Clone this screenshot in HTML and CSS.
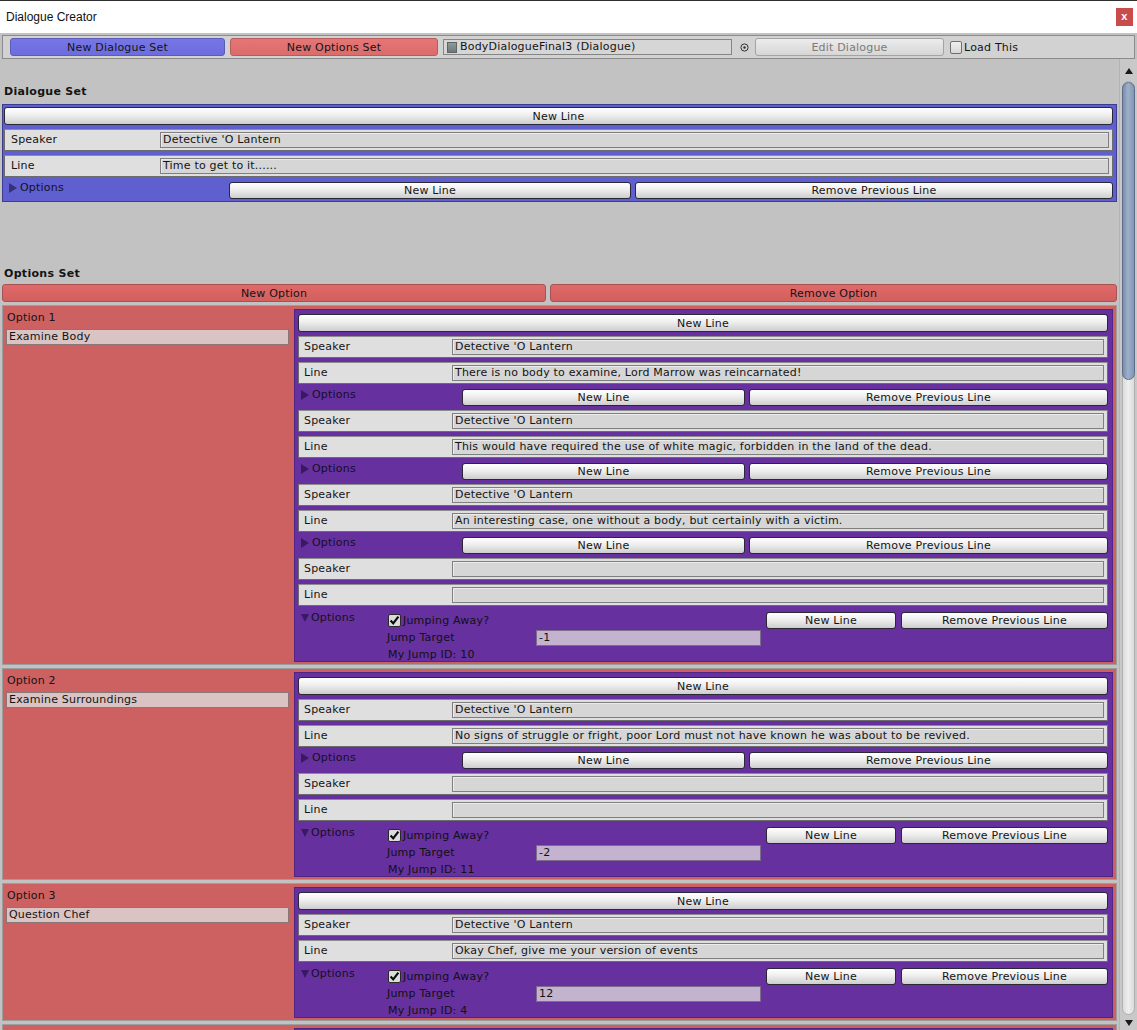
FILE: index.html
```html
<!DOCTYPE html>
<html>
<head>
<meta charset="utf-8">
<title>Dialogue Creator</title>
<link rel="stylesheet" href="styles.css">
</head>
<body>
<header class="titlebar">
  <span class="title">Dialogue Creator</span>
  <span class="close">x</span>
</header>
<div class="toolbar">
  <button class="tbtn tbtn-blue">New Dialogue Set</button>
  <button class="tbtn tbtn-red">New Options Set</button>
  <div class="objfield"><span class="objicon"></span>BodyDialogueFinal3 (Dialogue)</div>
  <svg class="picker" width="9" height="9" viewBox="0 0 9 9"><circle cx="4.5" cy="4.5" r="3.6" fill="none" stroke="#333" stroke-width="1"/><circle cx="4.5" cy="4.5" r="1.2" fill="#333"/></svg>
  <button class="tbtn tbtn-disabled">Edit Dialogue</button>
  <span class="tcheck"><span class="cbox"></span>Load This</span>
</div>
<div class="main">
  <div class="content">
    <div class="section-label">Dialogue Set</div>
    <div class="dlg-box">
      <button class="btn btn-full">New Line</button>
      <div class="row"><span class="row-label">Speaker</span><span class="field">Detective 'O Lantern</span></div>
      <div class="row"><span class="row-label">Line</span><span class="field">Time to get to it......</span></div>
      <div class="opt-row"><span class="foldout"><span class="tri-right"></span>Options</span><button class="btn btn-nl">New Line</button><button class="btn btn-rm">Remove Previous Line</button></div>
    </div>

    <div class="section-label section-label-2">Options Set</div>
    <div class="opt-actions">
      <button class="rbtn rbtn-new">New Option</button>
      <button class="rbtn rbtn-rm">Remove Option</button>
    </div>

    <div class="option">
      <div class="option-left">
        <div class="option-title">Option 1</div>
        <div class="option-field">Examine Body</div>
      </div>
      <div class="panel">
        <button class="btn btn-full">New Line</button>
        <div class="row"><span class="row-label">Speaker</span><span class="field">Detective 'O Lantern</span></div>
        <div class="row"><span class="row-label">Line</span><span class="field">There is no body to examine, Lord Marrow was reincarnated!</span></div>
        <div class="opt-row"><span class="foldout"><span class="tri-right"></span>Options</span><button class="btn btn-nl">New Line</button><button class="btn btn-rm">Remove Previous Line</button></div>
        <div class="row"><span class="row-label">Speaker</span><span class="field">Detective 'O Lantern</span></div>
        <div class="row"><span class="row-label">Line</span><span class="field">This would have required the use of white magic, forbidden in the land of the dead.</span></div>
        <div class="opt-row"><span class="foldout"><span class="tri-right"></span>Options</span><button class="btn btn-nl">New Line</button><button class="btn btn-rm">Remove Previous Line</button></div>
        <div class="row"><span class="row-label">Speaker</span><span class="field">Detective 'O Lantern</span></div>
        <div class="row"><span class="row-label">Line</span><span class="field">An interesting case, one without a body, but certainly with a victim.</span></div>
        <div class="opt-row"><span class="foldout"><span class="tri-right"></span>Options</span><button class="btn btn-nl">New Line</button><button class="btn btn-rm">Remove Previous Line</button></div>
        <div class="row"><span class="row-label">Speaker</span><span class="field"></span></div>
        <div class="row"><span class="row-label">Line</span><span class="field"></span></div>
        <div class="opt-exp">
          <span class="foldout foldout-exp"><span class="tri-down"></span>Options</span>
          <div class="jump">
            <div class="jump-toggle"><svg class="check" width="13" height="13" viewBox="0 0 13 13"><rect x="0.5" y="0.5" width="12" height="12" rx="1.5" fill="#dcdcdc" stroke="#2a2a2a"/><path d="M2.6 6.6 L5.2 9.4 L10.4 2.6" fill="none" stroke="#0d0d0d" stroke-width="2.2"/></svg><span class="jt">Jumping Away?</span></div>
            <div class="jump-target"><span class="jump-label">Jump Target</span><span class="jump-field">-1</span></div>
            <div class="jump-id">My Jump ID: 10</div>
          </div>
          <button class="btn btn-nl2">New Line</button><button class="btn btn-rm2">Remove Previous Line</button>
        </div>
      </div>
    </div>

    <div class="option">
      <div class="option-left">
        <div class="option-title">Option 2</div>
        <div class="option-field">Examine Surroundings</div>
      </div>
      <div class="panel">
        <button class="btn btn-full">New Line</button>
        <div class="row"><span class="row-label">Speaker</span><span class="field">Detective 'O Lantern</span></div>
        <div class="row"><span class="row-label">Line</span><span class="field">No signs of struggle or fright, poor Lord must not have known he was about to be revived.</span></div>
        <div class="opt-row"><span class="foldout"><span class="tri-right"></span>Options</span><button class="btn btn-nl">New Line</button><button class="btn btn-rm">Remove Previous Line</button></div>
        <div class="row"><span class="row-label">Speaker</span><span class="field"></span></div>
        <div class="row"><span class="row-label">Line</span><span class="field"></span></div>
        <div class="opt-exp">
          <span class="foldout foldout-exp"><span class="tri-down"></span>Options</span>
          <div class="jump">
            <div class="jump-toggle"><svg class="check" width="13" height="13" viewBox="0 0 13 13"><rect x="0.5" y="0.5" width="12" height="12" rx="1.5" fill="#dcdcdc" stroke="#2a2a2a"/><path d="M2.6 6.6 L5.2 9.4 L10.4 2.6" fill="none" stroke="#0d0d0d" stroke-width="2.2"/></svg><span class="jt">Jumping Away?</span></div>
            <div class="jump-target"><span class="jump-label">Jump Target</span><span class="jump-field">-2</span></div>
            <div class="jump-id">My Jump ID: 11</div>
          </div>
          <button class="btn btn-nl2">New Line</button><button class="btn btn-rm2">Remove Previous Line</button>
        </div>
      </div>
    </div>

    <div class="option">
      <div class="option-left">
        <div class="option-title">Option 3</div>
        <div class="option-field">Question Chef</div>
      </div>
      <div class="panel">
        <button class="btn btn-full">New Line</button>
        <div class="row"><span class="row-label">Speaker</span><span class="field">Detective 'O Lantern</span></div>
        <div class="row"><span class="row-label">Line</span><span class="field">Okay Chef, give me your version of events</span></div>
        <div class="opt-exp">
          <span class="foldout foldout-exp"><span class="tri-down"></span>Options</span>
          <div class="jump">
            <div class="jump-toggle"><svg class="check" width="13" height="13" viewBox="0 0 13 13"><rect x="0.5" y="0.5" width="12" height="12" rx="1.5" fill="#dcdcdc" stroke="#2a2a2a"/><path d="M2.6 6.6 L5.2 9.4 L10.4 2.6" fill="none" stroke="#0d0d0d" stroke-width="2.2"/></svg><span class="jt">Jumping Away?</span></div>
            <div class="jump-target"><span class="jump-label">Jump Target</span><span class="jump-field">12</span></div>
            <div class="jump-id">My Jump ID: 4</div>
          </div>
          <button class="btn btn-nl2">New Line</button><button class="btn btn-rm2">Remove Previous Line</button>
        </div>
      </div>
    </div>

    <div class="option option-cut">
      <div class="option-left"></div>
      <div class="panel panel-cut"></div>
    </div>
  </div>
  <div class="scrollbar">
    <span class="sb-arrow sb-up"></span>
    <div class="sb-track">
      <div class="sb-thumb"></div>
    </div>
    <span class="sb-arrow sb-down"></span>
  </div>
</div>
</body>
</html>
```

FILE: styles.css
```css
* { box-sizing: border-box; }
html, body { margin: 0; padding: 0; }
body {
  width: 1137px;
  height: 1030px;
  overflow: hidden;
  background: #c2c2c2;
  font-family: "DejaVu Sans", Verdana, sans-serif;
  font-size: 11px;
  letter-spacing: 0.2px;
  color: #141414;
}
button {
  font: inherit;
  letter-spacing: inherit;
  color: #141414;
  padding: 0;
  margin: 0;
  cursor: default;
}

/* title bar */
.titlebar {
  height: 33px;
  background: #ffffff;
  border-top: 1px solid #2e2e2e;
  display: flex;
  align-items: center;
  justify-content: space-between;
  padding: 0 4px 0 6px;
}
.title {
  font-family: "Liberation Sans", Arial, sans-serif;
  font-size: 12px;
  letter-spacing: 0;
  color: #111;
  margin-top: -1px;
}
.close {
  width: 17px;
  height: 18px;
  background: #c94b4b;
  color: #fff;
  font-family: "Liberation Sans", Arial, sans-serif;
  font-size: 11px;
  font-weight: bold;
  display: flex;
  align-items: center;
  justify-content: center;
  line-height: 1;
  padding-bottom: 2px;
}

/* toolbar */
.toolbar {
  margin: 2px 2px 0;
  height: 24px;
  border: 1px solid #8b8b8b;
  background: #d2d2d2;
  display: flex;
  align-items: center;
  padding-left: 7px;
}
.tbtn {
  height: 18px;
  border-radius: 3px;
  line-height: 17px;
  text-align: center;
}
.tbtn-blue {
  width: 215px;
  background: linear-gradient(#7676e6, #6c6cde);
  border: 1px solid #5b5bb8;
}
.tbtn-red {
  width: 208px;
  margin-left: 5px;
  background: linear-gradient(#e67575, #dc6b6b);
  border: 1px solid #b85b5b;
}
.objfield {
  width: 289px;
  height: 16px;
  margin-left: 5px;
  background: #d6d6d6;
  border: 1px solid #858585;
  display: flex;
  align-items: center;
  padding-left: 3px;
  line-height: 14px;
  white-space: nowrap;
}
.objicon {
  width: 10px;
  height: 11px;
  margin-right: 3px;
  background: linear-gradient(#8f9a9a, #6d7878);
  border: 1px solid #5c6464;
}
.picker { margin-left: 8px; }
.tbtn-disabled {
  width: 189px;
  margin-left: 6px;
  color: #7a7a7a;
  background: linear-gradient(#ececec, #d6d6d6);
  border: 1px solid #a3a3a3;
}
.tcheck {
  margin-left: 6px;
  display: flex;
  align-items: center;
}
.cbox {
  width: 12px;
  height: 13px;
  border: 1px solid #707070;
  border-radius: 2px;
  background: linear-gradient(#efefef, #d8d8d8);
  margin-right: 2px;
}

/* main */
.main {
  display: flex;
  height: 971px;
}
.content {
  width: 1119px;
  overflow: hidden;
  padding: 0 2px;
}
.section-label {
  margin-top: 26px;
  padding-left: 2px;
  line-height: 14px;
  font-weight: bold;
  letter-spacing: 0.3px;
}
.section-label-2 { margin-top: 65px; }

/* generic buttons */
.btn {
  height: 17px;
  border: 1px solid #2b2836;
  border-radius: 3px;
  background: linear-gradient(#ffffff 0%, #eeeeee 45%, #cdcdcd 100%);
  line-height: 16px;
  text-align: center;
  white-space: nowrap;
}
.btn-full {
  display: block;
  width: 100%;
  height: 18px;
  line-height: 17px;
}

/* rows */
.row {
  height: 22px;
  margin-top: 4px;
  background: #dfdfdf;
  border: 1px solid #6c6c6c;
  border-top-color: #8d8d8d;
  display: flex;
  align-items: center;
}
.row-label {
  width: 153px;
  flex: 0 0 153px;
  padding-left: 5px;
  line-height: 14px;
}
.field {
  flex: 1;
  height: 16px;
  margin-right: 3px;
  background: #d6d6d6;
  border: 1px solid #7f7f7f;
  box-shadow: inset 1px 1px 0 #ececec;
  padding-left: 2px;
  line-height: 14px;
  white-space: nowrap;
  overflow: hidden;
}

.opt-row {
  height: 22px;
  display: flex;
  align-items: flex-start;
  padding-top: 5px;
}
.foldout {
  display: flex;
  align-items: center;
  line-height: 14px;
  margin-top: -1px;
  padding-left: 3px;
  color: #14101e;
}
.tri-right {
  width: 0;
  height: 0;
  border-top: 5px solid transparent;
  border-bottom: 5px solid transparent;
  border-left: 8px solid rgba(20, 10, 50, 0.55);
  margin-right: 3px;
}
.tri-down {
  width: 0;
  height: 0;
  border-left: 4.5px solid transparent;
  border-right: 4.5px solid transparent;
  border-top: 8px solid rgba(20, 10, 50, 0.55);
  margin-right: 2px;
}
.btn-rm {
  flex: 1;
  margin-left: 4px;
}

/* dialogue set box */
.dlg-box {
  margin-top: 5px;
  background: #5f5fcf;
  border: 1px solid #3d3d8f;
  padding: 2px 3px 2px 1px;
}
.dlg-box .row-label { width: 155px; flex-basis: 155px; padding-left: 6px; }
.dlg-box .foldout { width: 225px; flex: 0 0 225px; padding-left: 5px; }
.dlg-box .btn-nl { width: 402px; flex: 0 0 402px; }

/* options set */
.opt-actions {
  margin-top: 3px;
  display: flex;
  height: 18px;
}
.rbtn {
  height: 18px;
  border: 1px solid #a85151;
  border-radius: 3px;
  background: linear-gradient(#e06a6a, #d25e5e);
  line-height: 17px;
  text-align: center;
}
.rbtn-new { width: 544px; flex: 0 0 544px; }
.rbtn-rm { flex: 1; margin-left: 4px; }

.option {
  margin-top: 3px;
  display: flex;
  background: #cd6060;
  border: 1px solid #9d9d9d;
  padding: 3px 3px 2px 0;
}
.option-left {
  width: 291px;
  flex: 0 0 291px;
  padding: 1px 5px 0 3px;
}
.option-title {
  line-height: 16px;
  padding-left: 1px;
}
.option-field {
  margin-top: 3px;
  height: 16px;
  background: #d9c3c3;
  border: 1px solid #8a7676;
  padding-left: 2px;
  line-height: 14px;
}
.panel {
  flex: 1;
  background: #66309e;
  border: 1px solid #4f2482;
  padding: 4px 4px 1px 3px;
}
.panel .foldout { width: 164px; flex: 0 0 164px; }
.panel .btn-nl { width: 283px; flex: 0 0 283px; }

.opt-exp {
  height: 54px;
  display: flex;
  align-items: flex-start;
  padding-top: 6px;
}
.panel .foldout-exp { width: 89px; flex: 0 0 89px; }
.jump {
  width: 374px;
  flex: 0 0 374px;
  color: #111;
}
.jump-toggle {
  height: 17px;
  display: flex;
  align-items: center;
  padding-left: 1px;
}
.check { flex: 0 0 13px; }
.jt { padding-left: 2px; }
.jump-target {
  height: 17px;
  display: flex;
  align-items: center;
}
.jump-label { width: 149px; flex: 0 0 149px; }
.jump-field {
  flex: 1;
  height: 16px;
  background: #c3b3cf;
  border: 1px solid #7d6d8d;
  padding-left: 2px;
  line-height: 14px;
}
.jump-id {
  padding-left: 1px;
  line-height: 16px;
  margin-top: 1px;
}
.btn-nl2 { width: 130px; flex: 0 0 130px; margin-left: 5px; }
.btn-rm2 { flex: 1; margin-left: 5px; }

.option-cut { height: 40px; }
.panel-cut { min-height: 30px; }

/* scrollbar */
.scrollbar {
  width: 18px;
  flex: 0 0 18px;
  background: #c8c8c8;
  border-left: 1px solid #b3b3b3;
  display: flex;
  flex-direction: column;
  align-items: center;
  padding-top: 5px;
}
.sb-arrow {
  width: 0;
  height: 0;
  border-left: 4px solid transparent;
  border-right: 4px solid transparent;
}
.sb-up {
  border-bottom: 6px solid #1a1a1a;
  margin-top: 4px;
  margin-bottom: 7px;
}
.sb-down {
  border-top: 6px solid #1a1a1a;
  margin-top: 5px;
  margin-bottom: 4px;
}
.sb-track {
  width: 13px;
  flex: 1;
  border-radius: 7px;
  background: linear-gradient(90deg, #dcdcdc, #eeeeee 50%, #dadada);
  border: 1px solid #b0b0b0;
  display: flex;
  flex-direction: column;
}
.sb-thumb {
  height: 298px;
  margin: 0 -1px;
  border-radius: 7px;
  background: linear-gradient(90deg, #7a8daa, #9eb0c9 45%, #8397b4);
  border: 1px solid #5b6d8a;
}
```
